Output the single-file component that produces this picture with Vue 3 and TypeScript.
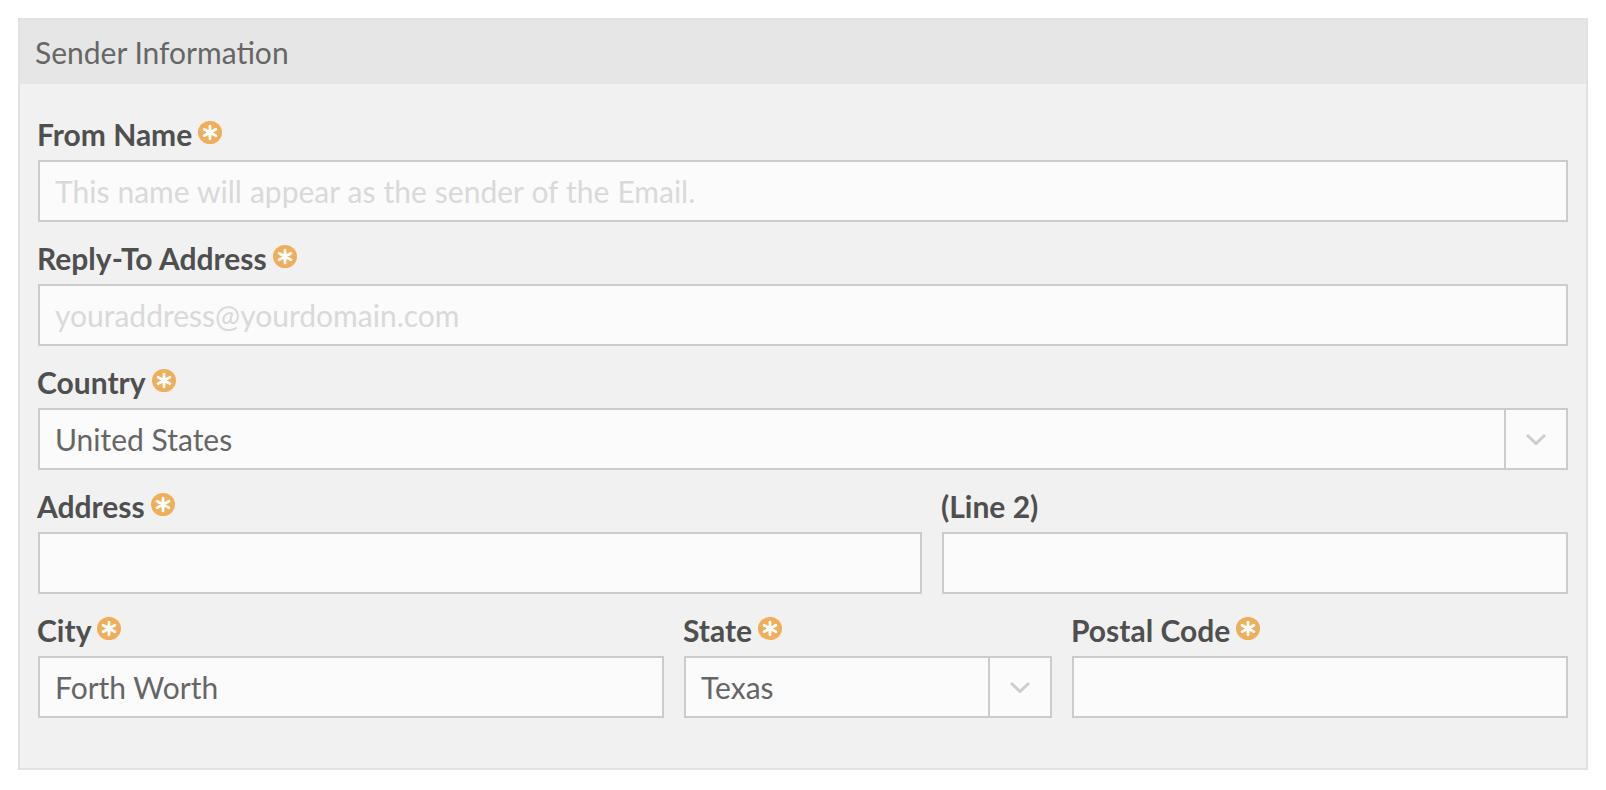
<script setup lang="ts">
interface Field {
  label: string
  required: boolean
  placeholder?: string
  value?: string
  select?: boolean
}
const rows: { cols: string; fields: Field[] }[] = [
  { cols: 'one', fields: [{ label: 'From Name', required: true, placeholder: 'This name will appear as the sender of the Email.' }] },
  { cols: 'one', fields: [{ label: 'Reply-To Address', required: true, placeholder: 'youraddress@yourdomain.com' }] },
  { cols: 'one', fields: [{ label: 'Country', required: true, value: 'United States', select: true }] },
  { cols: 'two', fields: [{ label: 'Address', required: true }, { label: '(Line 2)', required: false }] },
  { cols: 'three', fields: [
    { label: 'City', required: true, value: 'Forth Worth' },
    { label: 'State', required: true, value: 'Texas', select: true },
    { label: 'Postal Code', required: true },
  ] },
]
</script>

<template>
  <div class="page">
    <section class="panel">
      <header class="head">Sender Information</header>
      <div class="body">
        <div v-for="(row, i) in rows" :key="i" class="row" :class="row.cols">
          <div v-for="f in row.fields" :key="f.label" class="field">
            <div class="label">
              <span>{{ f.label }}</span>
              <svg v-if="f.required" class="req" viewBox="0 0 24 24" preserveAspectRatio="none" aria-hidden="true">
                <circle cx="12" cy="12" r="12" fill="#f0ad5a" />
                <path d="M12 5.2v13.6M6.1 8.6l11.8 6.8M17.9 8.6L6.1 15.4" stroke="#fff" stroke-width="2.8" stroke-linecap="round" fill="none" />
              </svg>
            </div>
            <div class="box">
              <div class="text" :class="{ ph: !f.value }">{{ f.value || f.placeholder }}</div>
              <div v-if="f.select" class="arrow">
                <svg viewBox="0 0 20 12" width="20" height="12" aria-hidden="true">
                  <path d="M1 2l9 8.500L19 2" stroke="#cdcdcd" stroke-width="3" fill="none" />
                </svg>
              </div>
            </div>
          </div>
        </div>
      </div>
    </section>
  </div>
</template>

<style>
html, body { margin: 0; background: #fff; }
</style>

<style scoped>
.page {
  padding: 18px 18px 0;
  font-family: Lato, "Open Sans", sans-serif;
}
.panel {
  border: 2px solid #e2e2e2;
  background: #f1f1f1;
  height: 752px;
  box-sizing: border-box;
}
.head {
  height: 64px;
  background: #e6e6e6;
  color: #666;
  font-size: 30px;
  line-height: 64px;
  padding-left: 15px;
}
.body {
  padding: 32px 18px 0;
}
.row {
  display: grid;
  column-gap: 20px;
  margin-bottom: 18px;
}
.one { grid-template-columns: 1fr; }
.two { grid-template-columns: 884px 1fr; }
.three { grid-template-columns: 626px 368px 1fr; }
.label {
  height: 36px;
  margin-bottom: 8px;
  display: flex;
  align-items: center;
  color: #4f4f4f;
  font-size: 30px;
  font-weight: 700;
  margin-left: -1px;
}
.req {
  width: 24px;
  height: 23px;
  margin: -3px 0 0 6px;
}
.box {
  height: 62px;
  box-sizing: border-box;
  border: 2px solid #cccccc;
  background: #fbfbfb;
  display: flex;
  align-items: stretch;
}
.text {
  flex: 1;
  padding-left: 15px;
  font-size: 30px;
  line-height: 58px;
  color: #666;
  white-space: nowrap;
}
.ph { color: #d9d9d9; word-spacing: 0.35px; }
.arrow {
  width: 60px;
  border-left: 2px solid #cccccc;
  display: flex;
  align-items: center;
  justify-content: center;
}
</style>
